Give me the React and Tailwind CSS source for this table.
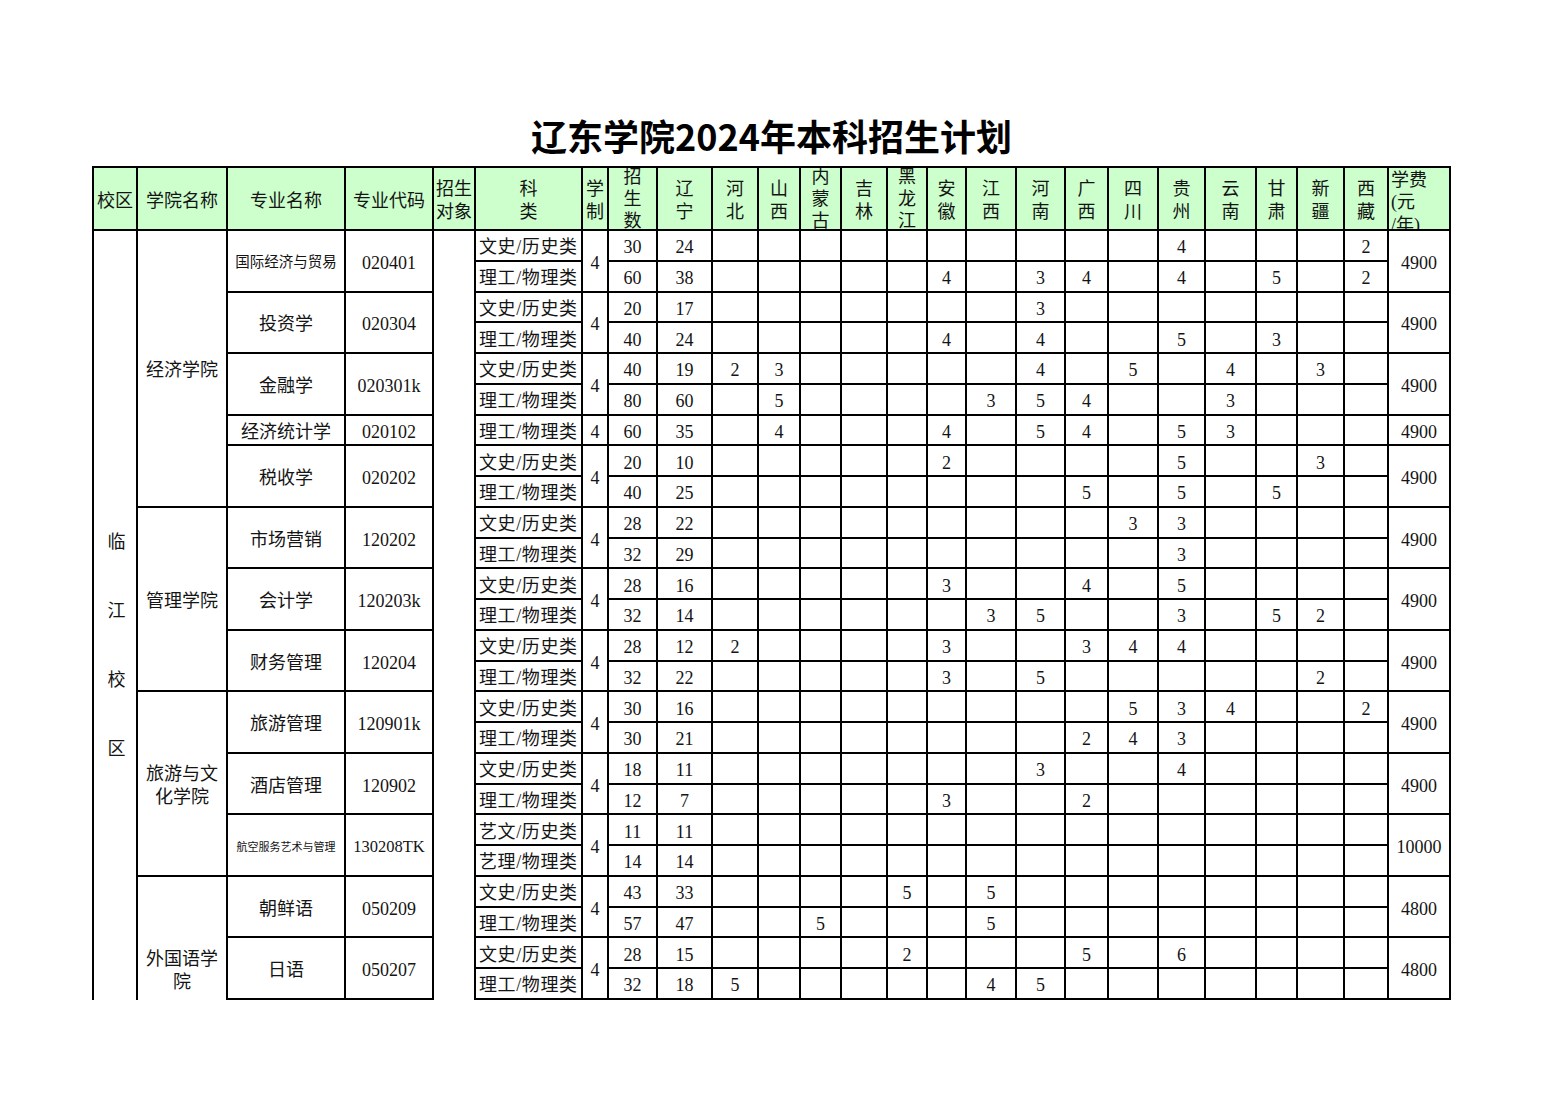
import React from 'react';

const PROVS = [
  ['辽', '宁'], ['河', '北'], ['山', '西'], ['内', '蒙', '古'], ['吉', '林'], ['黑', '龙', '江'],
  ['安', '徽'], ['江', '西'], ['河', '南'], ['广', '西'], ['四', '川'], ['贵', '州'],
  ['云', '南'], ['甘', '肃'], ['新', '疆'], ['西', '藏'],
];

const W = '文史/历史类';
const L = '理工/物理类';
const r = (type, total, v) => ({ type, total, v });

const COLLEGES = [
  {
    lines: ['经济学院'], span: 9, last: false, pt: 'pt-[5px]',
    majors: [
      { name: '国际经济与贸易', size: 'text-[14.5px]', code: '020401', fee: '4900', rows: [
        r(W, '30', { 0: '24', 11: '4', 15: '2' }),
        r(L, '60', { 0: '38', 6: '4', 8: '3', 9: '4', 11: '4', 13: '5', 15: '2' }),
      ] },
      { name: '投资学', size: 'text-[18px]', code: '020304', fee: '4900', rows: [
        r(W, '20', { 0: '17', 8: '3' }),
        r(L, '40', { 0: '24', 6: '4', 8: '4', 11: '5', 13: '3' }),
      ] },
      { name: '金融学', size: 'text-[18px]', code: '020301k', fee: '4900', rows: [
        r(W, '40', { 0: '19', 1: '2', 2: '3', 8: '4', 10: '5', 12: '4', 14: '3' }),
        r(L, '80', { 0: '60', 2: '5', 7: '3', 8: '5', 9: '4', 12: '3' }),
      ] },
      { name: '经济统计学', size: 'text-[18px]', code: '020102', fee: '4900', rows: [
        r(L, '60', { 0: '35', 2: '4', 6: '4', 8: '5', 9: '4', 11: '5', 12: '3' }),
      ] },
      { name: '税收学', size: 'text-[18px]', code: '020202', fee: '4900', rows: [
        r(W, '20', { 0: '10', 6: '2', 11: '5', 14: '3' }),
        r(L, '40', { 0: '25', 9: '5', 11: '5', 13: '5' }),
      ] },
    ],
  },
  {
    lines: ['管理学院'], span: 6, last: false, pt: 'pt-[5px]',
    majors: [
      { name: '市场营销', size: 'text-[18px]', code: '120202', fee: '4900', rows: [
        r(W, '28', { 0: '22', 10: '3', 11: '3' }),
        r(L, '32', { 0: '29', 11: '3' }),
      ] },
      { name: '会计学', size: 'text-[18px]', code: '120203k', fee: '4900', rows: [
        r(W, '28', { 0: '16', 6: '3', 9: '4', 11: '5' }),
        r(L, '32', { 0: '14', 7: '3', 8: '5', 11: '3', 13: '5', 14: '2' }),
      ] },
      { name: '财务管理', size: 'text-[18px]', code: '120204', fee: '4900', rows: [
        r(W, '28', { 0: '12', 1: '2', 6: '3', 9: '3', 10: '4', 11: '4' }),
        r(L, '32', { 0: '22', 6: '3', 8: '5', 14: '2' }),
      ] },
    ],
  },
  {
    lines: ['旅游与文', '化学院'], span: 6, last: false, pt: 'pt-[5px]',
    majors: [
      { name: '旅游管理', size: 'text-[18px]', code: '120901k', fee: '4900', rows: [
        r(W, '30', { 0: '16', 10: '5', 11: '3', 12: '4', 15: '2' }),
        r(L, '30', { 0: '21', 9: '2', 10: '4', 11: '3' }),
      ] },
      { name: '酒店管理', size: 'text-[18px]', code: '120902', fee: '4900', rows: [
        r(W, '18', { 0: '11', 8: '3', 11: '4' }),
        r(L, '12', { 0: '7', 6: '3', 9: '2' }),
      ] },
      { name: '航空服务艺术与管理', size: 'text-[11px]', code: '130208TK', codeSize: 'text-[16.5px]', fee: '10000', rows: [
        r('艺文/历史类', '11', { 0: '11' }),
        r('艺理/物理类', '14', { 0: '14' }),
      ] },
    ],
  },
  {
    lines: ['外国语学', '院'], span: 4, last: true, pt: 'pt-[66px]',
    majors: [
      { name: '朝鲜语', size: 'text-[18px]', code: '050209', fee: '4800', rows: [
        r(W, '43', { 0: '33', 5: '5', 7: '5' }),
        r(L, '57', { 0: '47', 3: '5', 7: '5' }),
      ] },
      { name: '日语', size: 'text-[18px]', code: '050207', fee: '4800', rows: [
        r(W, '28', { 0: '15', 5: '2', 9: '5', 11: '6' }),
        r(L, '32', { 0: '18', 1: '5', 7: '4', 8: '5' }),
      ] },
    ],
  },
];

const SPAN = {
  1: 'row-span-1',
  2: 'row-span-2',
  4: 'row-span-4',
  6: 'row-span-6',
  9: 'row-span-9',
  25: 'row-span-25',
};

const cellB = 'border-r-2 border-b-2 border-black';
const head = 'border-r-2 border-b-2 border-black bg-[#ccffcc] overflow-hidden flex flex-col justify-center text-[18px]';
const body = 'border-r-2 border-b-2 border-black flex items-center justify-center pt-[5px]';

function HeadCell({ lines, extra = 'items-center pt-[5px] leading-[23px]' }) {
  return (
    <div className={`${head} ${extra}`}>
      {lines.map((l, i) => (
        <div key={i} className="whitespace-nowrap">{l}</div>
      ))}
    </div>
  );
}

function buildBody() {
  const cells = [];
  let first = true;
  COLLEGES.forEach((col, ci) => {
    col.majors.forEach((m, mi) => {
      m.rows.forEach((row, ri) => {
        const k = `${ci}-${mi}-${ri}`;
        if (first) {
          cells.push(
            <div key={k + 'campus'} className={`${SPAN[25]} border-r-2 border-black flex flex-col items-center justify-center gap-[51px] pt-[60px] pl-[3px] text-[18px] leading-[18px]`}>
              <div>临</div><div>江</div><div>校</div><div>区</div>
            </div>
          );
        }
        if (mi === 0 && ri === 0) {
          cells.push(
            <div key={k + 'col'} className={`${SPAN[col.span]} ${col.last ? 'border-r-2 border-black' : cellB} flex flex-col items-center justify-center text-[18px] leading-[23px] ${col.pt}`}>
              {col.lines.map((l, i) => <div key={i} className="whitespace-nowrap">{l}</div>)}
            </div>
          );
        }
        if (ri === 0) {
          cells.push(
            <div key={k + 'name'} className={`${SPAN[m.rows.length]} ${body} ${m.size} whitespace-nowrap`}>{m.name}</div>
          );
          cells.push(
            <div key={k + 'code'} className={`${SPAN[m.rows.length]} ${body} ${m.codeSize || 'text-[18px]'} whitespace-nowrap`}>{m.code}</div>
          );
        }
        if (first) {
          cells.push(<div key={k + 'obj'} className={`${SPAN[25]} border-r-2 border-black`} />);
        }
        cells.push(
          <div key={k + 'type'} className={`${cellB} flex items-center pl-[3px] pt-[5px] text-[18px] tracking-[0.6px] whitespace-nowrap overflow-hidden`}>{row.type}</div>
        );
        if (ri === 0) {
          cells.push(
            <div key={k + 'yrs'} className={`${SPAN[m.rows.length]} ${body} text-[18px]`}>4</div>
          );
        }
        cells.push(<div key={k + 'tot'} className={`${body} text-[18px]`}>{row.total}</div>);
        PROVS.forEach((_, pi) => {
          cells.push(<div key={k + 'p' + pi} className={`${body} text-[18px]`}>{row.v[pi] || ''}</div>);
        });
        if (ri === 0) {
          cells.push(
            <div key={k + 'fee'} className={`${SPAN[m.rows.length]} ${body} text-[18px]`}>{m.fee}</div>
          );
        }
        first = false;
      });
    });
  });
  return cells;
}

export default function App() {
  return (
    <div className="min-h-screen w-full bg-white text-[#141414] font-[family-name:'Liberation_Serif','Noto_Sans_CJK_SC',serif]">
      <div className="pl-[92px] pt-[111px] pb-[100px]">
        <div className="w-[1359px]">
          <div className="h-[48px] leading-[48px] mb-[7px] text-center text-[36px] font-bold text-black font-[family-name:'Noto_Sans_CJK_SC',sans-serif]">
            辽东学院2024年本科招生计划
          </div>
          <div className="grid grid-cols-[44px_90px_118px_88px_42px_107px_26px_49px_55px_46px_42px_41px_46px_40px_39px_50px_49px_43px_50px_47px_51px_41px_47px_44px_62px] grid-rows-[63px_repeat(25,30.76px)] border-l-2 border-t-2 border-black">
            <HeadCell lines={['校区']} />
            <HeadCell lines={['学院名称']} />
            <HeadCell lines={['专业名称']} />
            <HeadCell lines={['专业代码']} />
            <HeadCell lines={['招生', '对象']} />
            <HeadCell lines={['科', '类']} />
            <HeadCell lines={['学', '制']} />
            <HeadCell lines={['招', '生', '数']} extra="items-center pt-[1px] leading-[22px]" />
            {PROVS.map((p, i) => (
              <HeadCell key={i} lines={p} extra={p.length === 3 ? 'items-center pt-[1px] leading-[22px]' : 'items-center pt-[5px] leading-[23px]'} />
            ))}
            <HeadCell lines={['学费', '(元', '/年)']} extra="items-start pl-[2px] pt-[8px] leading-[22.5px]" />
            {buildBody()}
          </div>
        </div>
      </div>
    </div>
  );
}
